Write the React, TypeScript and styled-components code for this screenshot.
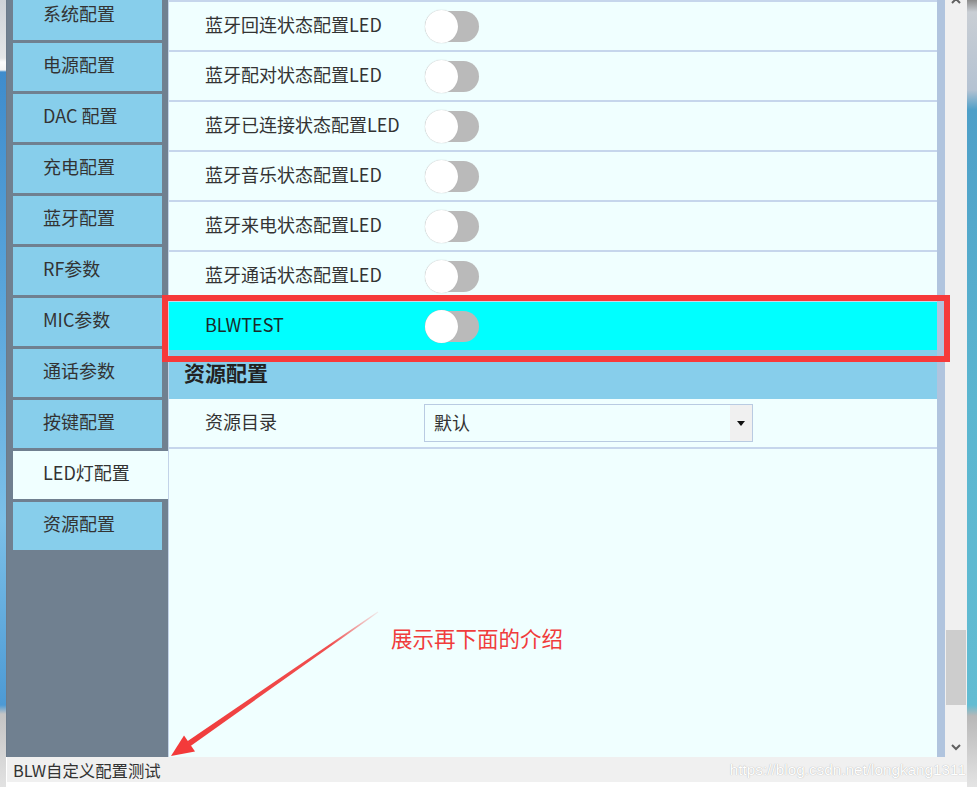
import styled, { createGlobalStyle } from "styled-components";

const GlobalStyle = createGlobalStyle`
  html, body {
    margin: 0;
    padding: 0;
    background: #fff;
  }
  body {
    font-family: "Noto Sans CJK SC", "Noto Sans", sans-serif;
  }
`;

const Page = styled.div`
  position: relative;
  display: flex;
  width: 977px;
  height: 787px;
  overflow: hidden;
  background: #fff;
`;

const DesktopEdge = styled.div<{ $side: "left" | "right" }>`
  flex-shrink: 0;
  width: ${(p) => (p.$side === "left" ? 6 : 10)}px;
  background: ${(p) =>
    p.$side === "left"
      ? "linear-gradient(to bottom, #cfd3d8 0, #e4e6e8 58px, #fbfbfb 62px, #f4f4f4 70px, #3f8ccc 72px, #5aa6dc 300px, #7cc0e8 520px, #4d9ad4 705px, #c4c4c4 714px, #e2e2e2 787px)"
      : "linear-gradient(to bottom, #8b8b8b 0, #c9ced4 12px, #b4c2d2 90px, #4e9fc8 110px, #5bb6d0 400px, #62bcd2 705px, #b8b8b8 716px, #e4e4e4 787px)"};
`;

const Window = styled.div`
  display: flex;
  flex-direction: column;
  width: 961px;
  height: 787px;
`;

const Body = styled.div`
  display: flex;
  height: 757px;
  border-left: 1px solid #6b7a8a;
`;

const Sidebar = styled.nav`
  display: flex;
  flex-direction: column;
  gap: 3px;
  width: 161px;
  flex-shrink: 0;
  padding: 0 6px;
  box-sizing: border-box;
  background: #708090;
  overflow: hidden;
`;

const NavItem = styled.div<{ $active?: boolean }>`
  display: flex;
  align-items: center;
  flex-shrink: 0;
  height: 48px;
  padding: 0 0 7px 30px;
  box-sizing: border-box;
  margin-right: ${(p) => (p.$active ? "-6px" : "0")};
  background: ${(p) => (p.$active ? "#f0ffff" : "#87ceeb")};
  color: #333;
  font-size: 18px;
  &:first-child {
    margin-top: -8px;
  }
`;

const Content = styled.main`
  width: 769px;
  flex-shrink: 0;
  box-sizing: border-box;
  border-left: 1px solid #c3d3e8;
  background: #f0ffff;
`;

const TopLine = styled.div`
  height: 2px;
  background: #c6d6ec;
`;

const Row = styled.div<{ $highlight?: boolean; $open?: boolean }>`
  display: grid;
  grid-template-columns: 220px 1fr;
  align-items: center;
  height: ${(p) => (p.$open ? "48px" : "50px")};
  padding-left: 36px;
  box-sizing: border-box;
  border-bottom: ${(p) => (p.$open ? "none" : "2px solid #c6d6ec")};
  background: ${(p) => (p.$highlight ? "#00ffff" : "transparent")};
  color: ${(p) => (p.$highlight ? "#1a2a2a" : "#333")};
  font-size: 18px;
`;

const Label = styled.span`
  padding-bottom: 4px;
`;

const SectionHeader = styled.div`
  display: flex;
  align-items: center;
  height: 49px;
  padding: 0 0 6px 15px;
  box-sizing: border-box;
  background: #87ceeb;
  color: #222;
  font-size: 21px;
  font-weight: 700;
`;

const Toggle = styled.span`
  position: relative;
  display: block;
  width: 54px;
  height: 31px;
  border-radius: 16px;
  background: #bababa;
  &::after {
    content: "";
    position: absolute;
    left: 0;
    top: -1px;
    width: 33px;
    height: 33px;
    border-radius: 50%;
    background: #fff;
    box-shadow: 0 0 1px 0 #a8a8a8;
  }
`;

const Combo = styled.div`
  display: flex;
  width: 329px;
  height: 38px;
  box-sizing: border-box;
  margin-left: -1px;
  border: 1px solid #b9cbe2;
  background: #f0ffff;
`;

const ComboText = styled.span`
  flex: 1;
  padding-left: 9px;
  line-height: 34px;
  color: #333;
  font-size: 18px;
`;

const ComboArrow = styled.span`
  display: flex;
  align-items: center;
  justify-content: center;
  width: 22px;
  background: #f0f0f0;
`;

const RightStripe = styled.div`
  width: 8px;
  flex-shrink: 0;
  background: #b0c4de;
`;

const Scrollbar = styled.div`
  display: flex;
  flex-direction: column;
  align-items: center;
  justify-content: space-between;
  width: 22px;
  flex-shrink: 0;
  background: #f0f0f0;
`;

const ScrollTrack = styled.div`
  display: flex;
  flex-direction: column;
  justify-content: flex-end;
  flex: 1;
  width: 100%;
  padding-bottom: 38px;
  box-sizing: border-box;
`;

const ScrollThumb = styled.div`
  height: 75px;
  margin: 0 1px 0 1px;
  background: #cdcdcd;
`;

const ChevronBox = styled.div<{ $up?: boolean }>`
  display: flex;
  margin-top: ${(p) => (p.$up ? "-3px" : "0")};
  margin-bottom: ${(p) => (p.$up ? "0" : "6px")};
`;

const StatusBar = styled.footer`
  display: flex;
  align-items: center;
  justify-content: space-between;
  height: 25px;
  padding: 0 1px 0 6px;
  margin-left: 1px;
  background: #f0f0f0;
`;

const StatusText = styled.span`
  color: #333;
  font-size: 16.4px;
`;

const Watermark = styled.span`
  color: #ffffff;
  font-family: "Liberation Sans", Arial, sans-serif;
  font-size: 15.3px;
  text-shadow: 0 0 1px rgba(0, 0, 0, 0.35);
`;

const HighlightBox = styled.div`
  position: absolute;
  left: 162px;
  top: 295px;
  width: 788px;
  height: 67px;
  box-sizing: border-box;
  border: 6px solid #f63a3a;
  pointer-events: none;
`;

const Note = styled.div`
  position: absolute;
  left: 391px;
  top: 625px;
  color: #f03c3c;
  font-size: 21.5px;
  line-height: 25px;
`;

const ArrowLayer = styled.svg`
  position: absolute;
  left: 0;
  top: 0;
  pointer-events: none;
`;

const Chevron = ({ up }: { up?: boolean }) => (
  <svg width="12" height="8" viewBox="0 0 12 8">
    <polyline
      points={up ? "2,6 6,2 10,6" : "2,2 6,6 10,2"}
      fill="none"
      stroke="#606060"
      strokeWidth="2"
    />
  </svg>
);

const navItems = [
  "系统配置",
  "电源配置",
  "DAC 配置",
  "充电配置",
  "蓝牙配置",
  "RF参数",
  "MIC参数",
  "通话参数",
  "按键配置",
  "LED灯配置",
  "资源配置",
];

const ledRows = [
  "蓝牙回连状态配置LED",
  "蓝牙配对状态配置LED",
  "蓝牙已连接状态配置LED",
  "蓝牙音乐状态配置LED",
  "蓝牙来电状态配置LED",
  "蓝牙通话状态配置LED",
];

export default function App() {
  return (
    <Page>
      <GlobalStyle />
      <DesktopEdge $side="left" />
      <Window>
        <Body>
          <Sidebar>
            {navItems.map((n) => (
              <NavItem key={n} $active={n === "LED灯配置"}>
                {n}
              </NavItem>
            ))}
          </Sidebar>
          <Content>
            <TopLine />
            {ledRows.map((r) => (
              <Row key={r}>
                <Label>{r}</Label>
                <Toggle />
              </Row>
            ))}
            <Row $highlight $open>
              <Label>BLWTEST</Label>
              <Toggle />
            </Row>
            <SectionHeader>资源配置</SectionHeader>
            <Row>
              <Label>资源目录</Label>
              <Combo>
                <ComboText>默认</ComboText>
                <ComboArrow>
                  <svg width="8" height="5" viewBox="0 0 8 5">
                    <polygon points="0,0 8,0 4,5" fill="#111" />
                  </svg>
                </ComboArrow>
              </Combo>
            </Row>
          </Content>
          <RightStripe />
          <Scrollbar>
            <ChevronBox $up>
              <Chevron up />
            </ChevronBox>
            <ScrollTrack>
              <ScrollThumb />
            </ScrollTrack>
            <ChevronBox>
              <Chevron />
            </ChevronBox>
          </Scrollbar>
        </Body>
        <StatusBar>
          <StatusText>BLW自定义配置测试</StatusText>
          <Watermark>https://blog.csdn.net/longkang1311</Watermark>
        </StatusBar>
      </Window>
      <DesktopEdge $side="right" />

      <HighlightBox />
      <Note>展示再下面的介绍</Note>
      <ArrowLayer width="977" height="787" viewBox="0 0 977 787">
        <defs>
          <linearGradient id="fade" x1="378" y1="612" x2="190" y2="744" gradientUnits="userSpaceOnUse">
            <stop offset="0" stopColor="#f03c3c" stopOpacity="0.1" />
            <stop offset="0.25" stopColor="#f03c3c" stopOpacity="0.9" />
            <stop offset="1" stopColor="#f03c3c" />
          </linearGradient>
        </defs>
        <polygon points="378.3,612.4 190.6,746 187.4,741.2 377.7,611.6" fill="url(#fade)" />
        <polygon points="171,756 184,735.5 195,751.5" fill="#f33a3a" />
      </ArrowLayer>
    </Page>
  );
}
